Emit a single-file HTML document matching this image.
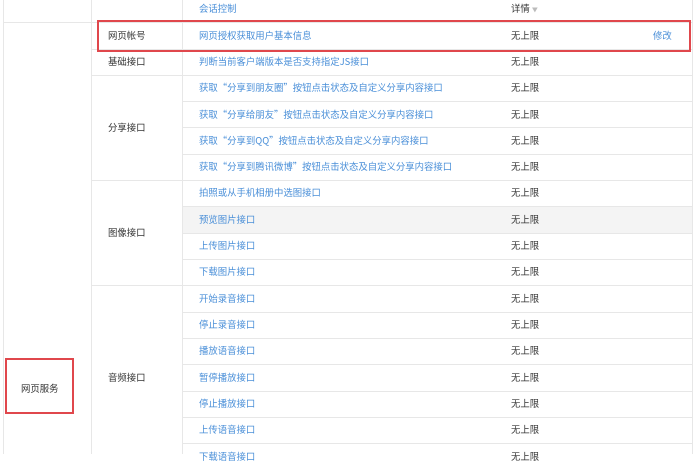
<!DOCTYPE html>
<html><head><meta charset="utf-8"><style>
body{margin:0;width:700px;height:454px;overflow:hidden;background:#fff;font-family:"Noto Sans CJK SC","Liberation Sans",sans-serif;font-size:9.4px;color:#333;position:relative}
div{position:absolute;box-sizing:border-box}
.h{height:1px;background:#e7e7e7}
.v{width:1px;background:#e7e7e7}
.t{white-space:nowrap;line-height:26px;height:26px;margin-top:-1px}
.b{color:#4a8fd8}
</style></head><body>
<div class="v" style="left:3px;top:0;height:454px"></div>
<div class="v" style="left:91px;top:0;height:454px"></div>
<div class="v" style="left:182px;top:0;height:454px"></div>
<div class="v" style="left:692px;top:0;height:454px"></div>
<div class="h" style="left:3px;top:22px;width:690px"></div>
<div style="left:183px;top:206px;width:509px;height:27px;background:#f4f4f4"></div>
<div class="h" style="left:91px;top:49px;width:602px"></div>
<div class="h" style="left:91px;top:75px;width:602px"></div>
<div class="h" style="left:182px;top:101px;width:511px"></div>
<div class="h" style="left:182px;top:127px;width:511px"></div>
<div class="h" style="left:182px;top:154px;width:511px"></div>
<div class="h" style="left:91px;top:180px;width:602px"></div>
<div class="h" style="left:182px;top:206px;width:511px"></div>
<div class="h" style="left:182px;top:233px;width:511px"></div>
<div class="h" style="left:182px;top:259px;width:511px"></div>
<div class="h" style="left:91px;top:285px;width:602px"></div>
<div class="h" style="left:182px;top:312px;width:511px"></div>
<div class="h" style="left:182px;top:338px;width:511px"></div>
<div class="h" style="left:182px;top:364px;width:511px"></div>
<div class="h" style="left:182px;top:391px;width:511px"></div>
<div class="h" style="left:182px;top:417px;width:511px"></div>
<div class="h" style="left:182px;top:443px;width:511px"></div>

<div class="t b" style="left:199px;top:-4px">会话控制</div>
<div class="t" style="left:511px;top:-4px">详情 <span style="color:#bbb;font-size:6px">▼</span></div>

<div class="t" style="left:108px;top:23px">网页帐号</div>
<div class="t" style="left:108px;top:49px">基础接口</div>
<div class="t" style="left:108px;top:115px">分享接口</div>
<div class="t" style="left:108px;top:220px">图像接口</div>
<div class="t" style="left:108px;top:365px">音频接口</div>
<div class="t" style="left:21px;top:376px">网页服务</div>

<div class="t b" style="left:199px;top:23px">网页授权获取用户基本信息</div>
<div class="t b" style="left:199px;top:49px">判断当前客户端版本是否支持指定JS接口</div>
<div class="t b" style="left:199px;top:75px">获取“分享到朋友圈”按钮点击状态及自定义分享内容接口</div>
<div class="t b" style="left:199px;top:102px">获取“分享给朋友”按钮点击状态及自定义分享内容接口</div>
<div class="t b" style="left:199px;top:128px">获取“分享到QQ”按钮点击状态及自定义分享内容接口</div>
<div class="t b" style="left:199px;top:154px">获取“分享到腾讯微博”按钮点击状态及自定义分享内容接口</div>
<div class="t b" style="left:199px;top:180px">拍照或从手机相册中选图接口</div>
<div class="t b" style="left:199px;top:207px">预览图片接口</div>
<div class="t b" style="left:199px;top:233px">上传图片接口</div>
<div class="t b" style="left:199px;top:259px">下载图片接口</div>
<div class="t b" style="left:199px;top:286px">开始录音接口</div>
<div class="t b" style="left:199px;top:312px">停止录音接口</div>
<div class="t b" style="left:199px;top:338px">播放语音接口</div>
<div class="t b" style="left:199px;top:365px">暂停播放接口</div>
<div class="t b" style="left:199px;top:391px">停止播放接口</div>
<div class="t b" style="left:199px;top:417px">上传语音接口</div>
<div class="t b" style="left:199px;top:444px">下载语音接口</div>

<div class="t" style="left:511px;top:23px">无上限</div>
<div class="t b" style="left:653px;top:23px">修改</div>
<div class="t" style="left:511px;top:49px">无上限</div>
<div class="t" style="left:511px;top:75px">无上限</div>
<div class="t" style="left:511px;top:102px">无上限</div>
<div class="t" style="left:511px;top:128px">无上限</div>
<div class="t" style="left:511px;top:154px">无上限</div>
<div class="t" style="left:511px;top:180px">无上限</div>
<div class="t" style="left:511px;top:207px">无上限</div>
<div class="t" style="left:511px;top:233px">无上限</div>
<div class="t" style="left:511px;top:259px">无上限</div>
<div class="t" style="left:511px;top:286px">无上限</div>
<div class="t" style="left:511px;top:312px">无上限</div>
<div class="t" style="left:511px;top:338px">无上限</div>
<div class="t" style="left:511px;top:365px">无上限</div>
<div class="t" style="left:511px;top:391px">无上限</div>
<div class="t" style="left:511px;top:417px">无上限</div>
<div class="t" style="left:511px;top:444px">无上限</div>

<div style="left:97px;top:20px;width:594px;height:32px;border:2px solid #e0474c"></div>
<div style="left:5px;top:358px;width:69px;height:56px;border:2px solid #e0474c"></div>
</body></html>
